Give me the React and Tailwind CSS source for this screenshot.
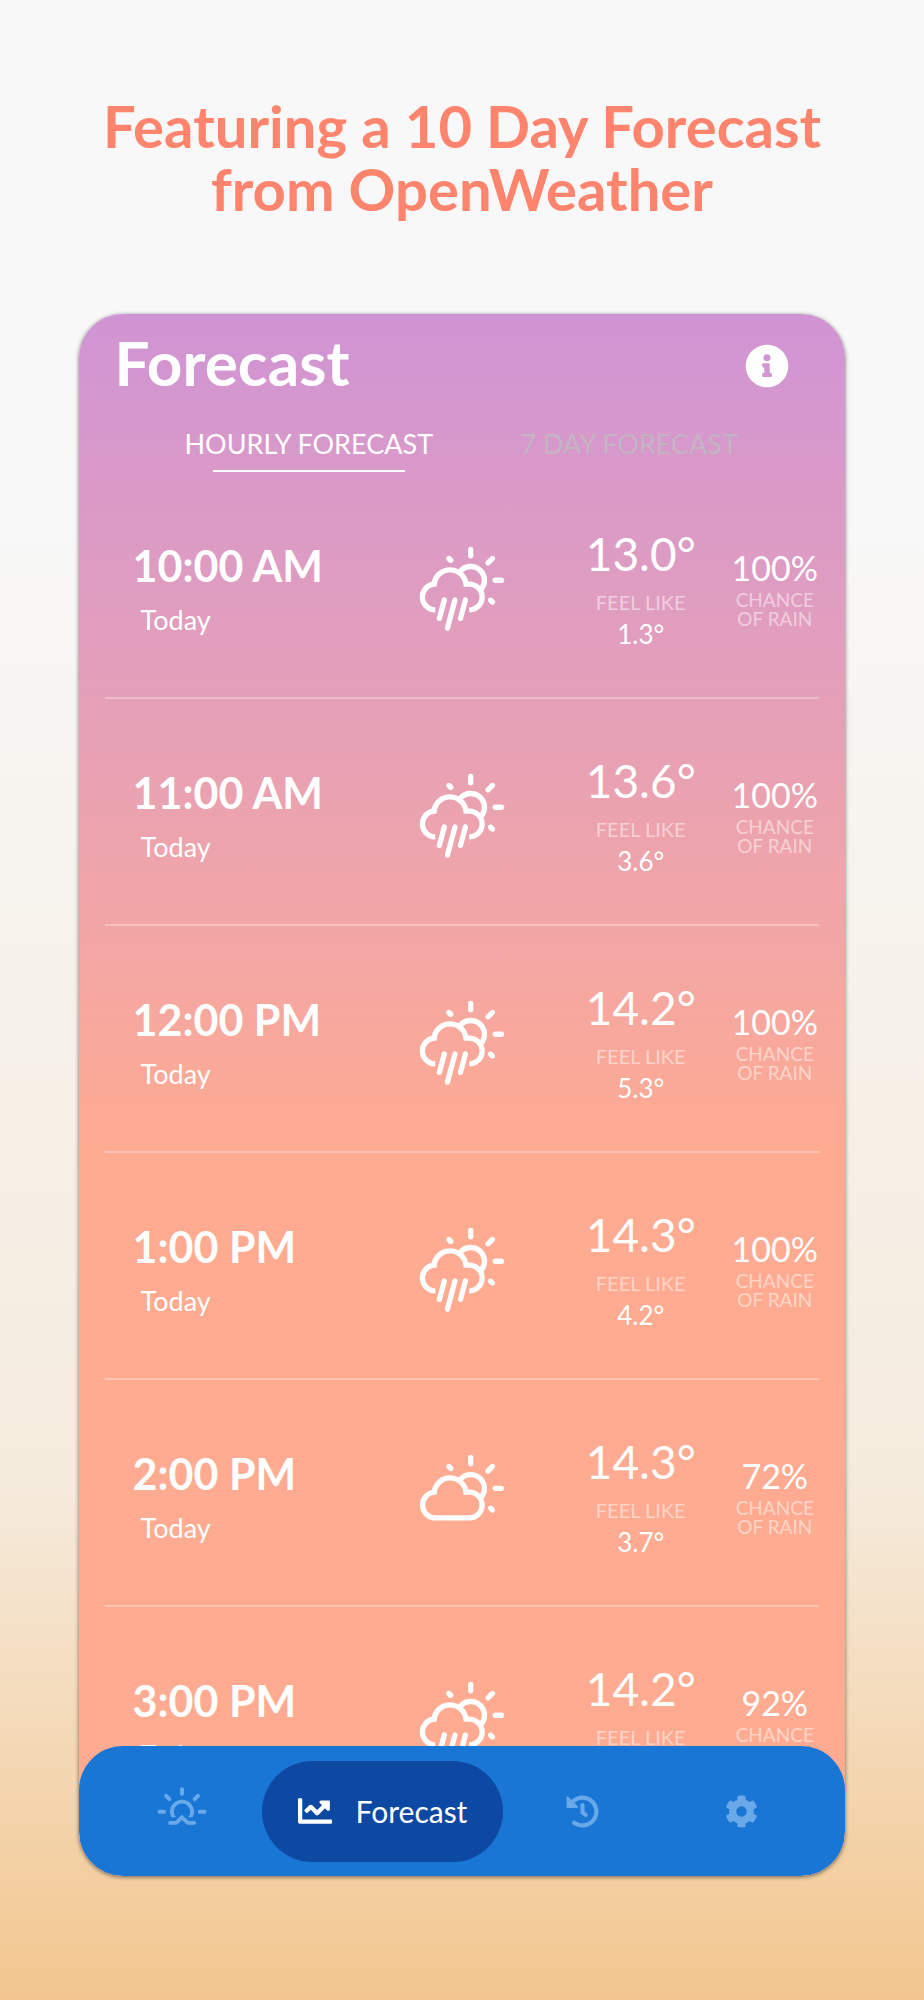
import React, { useState } from 'react';
import { FaInfoCircle, FaChartLine, FaHistory, FaCog } from 'react-icons/fa';
import { WiDayRain, WiDayCloudy, WiSunrise } from 'react-icons/wi';

const HOURS = [
  { time: '10:00 AM', Icon: WiDayRain, temp: '13.0', feel: '1.3', rain: 100 },
  { time: '11:00 AM', Icon: WiDayRain, temp: '13.6', feel: '3.6', rain: 100 },
  { time: '12:00 PM', Icon: WiDayRain, temp: '14.2', feel: '5.3', rain: 100 },
  { time: '1:00 PM', Icon: WiDayRain, temp: '14.3', feel: '4.2', rain: 100 },
  { time: '2:00 PM', Icon: WiDayCloudy, temp: '14.3', feel: '3.7', rain: 72 },
  { time: '3:00 PM', Icon: WiDayRain, temp: '14.2', feel: '3.8', rain: 92 },
];

const TABS = ['Hourly Forecast', '7 Day Forecast'];

function HourRow({ hour }) {
  const { time, Icon, temp, feel, rain } = hour;

  return (
    <li className="grid h-[227px] shrink-0 grid-cols-[3fr_2fr_2fr_1fr] border-b-2 border-white/30 pt-[52px]">
      <div className="pt-4 pl-7">
        <p className="text-[43px] leading-[52px] font-bold">{time}</p>
        <p className="mt-2 pl-2 text-[27px] leading-10">Today</p>
      </div>
      <Icon className="mx-auto mt-5 h-[94px] w-[94px]" />
      <div className="text-center">
        <p className="text-[46px] leading-[60px]">{temp}°</p>
        <p className="mt-1 text-xl leading-7 text-white/50">FEEL LIKE</p>
        <p className="text-[26px] leading-9">{feel}°</p>
      </div>
      <div className="pt-[26px] text-center">
        <p className="text-[34px] leading-9">{rain}%</p>
        <p className="mt-1 text-[19px] leading-[19px] text-white/50">
          CHANCE
          <br />
          OF&nbsp;RAIN
        </p>
      </div>
    </li>
  );
}

function NavButton({ label, children }) {
  return (
    <button
      type="button"
      aria-label={label}
      className="flex h-full flex-1 items-center justify-center text-[#69a9e9]"
    >
      {children}
    </button>
  );
}

export default function App() {
  const [tab, setTab] = useState(TABS[0]);

  return (
    <div className="flex h-screen flex-col items-center bg-linear-to-b from-[#f8f8f8] from-25% via-[#f5ebdd] via-74% to-[#f2c68e] font-['Lato',sans-serif]">
      <h1 className="px-4 pt-[94px] text-center text-[58px] leading-[63px] font-bold text-[#ff846d]">
        Featuring a 10 Day Forecast
        <br />
        from OpenWeather
      </h1>

      <main className="mt-[94px] mb-[124px] flex min-h-0 w-[83%] flex-1 flex-col overflow-hidden rounded-[44px] bg-linear-to-b from-[#d094d4] to-[#ffab91] to-54% text-white shadow-[0_1px_4px_rgba(0,0,0,0.55)]">
        <header className="flex items-start justify-between pr-14 pl-9">
          <h2 className="pt-2 text-[62px] leading-[80px] font-bold">Forecast</h2>
          <button type="button" aria-label="About this forecast" className="mt-[30px]">
            <FaInfoCircle className="h-11 w-11" />
          </button>
        </header>

        <div role="tablist" className="flex justify-center pt-6 pr-14 pl-[70px]">
          {TABS.map((name) => (
            <button
              key={name}
              type="button"
              role="tab"
              aria-selected={tab === name}
              onClick={() => setTab(name)}
              className={`flex flex-1 flex-col items-center gap-2 text-[27px] leading-9 whitespace-nowrap uppercase ${
                tab === name ? 'text-white' : 'text-[#c3b4c3]'
              }`}
            >
              {name}
              <span className={`h-0.5 w-3/5 ${tab === name ? 'bg-white' : ''}`} />
            </button>
          ))}
        </div>

        <ul className="flex min-h-0 flex-1 flex-col overflow-y-auto px-[26px] [scrollbar-width:none]">
          {HOURS.map((hour) => (
            <HourRow key={hour.time} hour={hour} />
          ))}
        </ul>

        <nav className="flex h-[130px] shrink-0 items-center rounded-[44px] bg-[#1976d4] px-6">
          <NavButton label="Today">
            <WiSunrise className="h-[60px] w-[60px]" />
          </NavButton>
          <button
            type="button"
            className="flex h-[101px] items-center gap-6 rounded-full bg-[#0d48a3] px-9 text-[30px]"
          >
            <FaChartLine className="h-[34px] w-[34px]" />
            Forecast
          </button>
          <NavButton label="History">
            <FaHistory className="h-[33px] w-[33px]" />
          </NavButton>
          <NavButton label="Settings">
            <FaCog className="h-[33px] w-[33px]" />
          </NavButton>
        </nav>
      </main>
    </div>
  );
}
